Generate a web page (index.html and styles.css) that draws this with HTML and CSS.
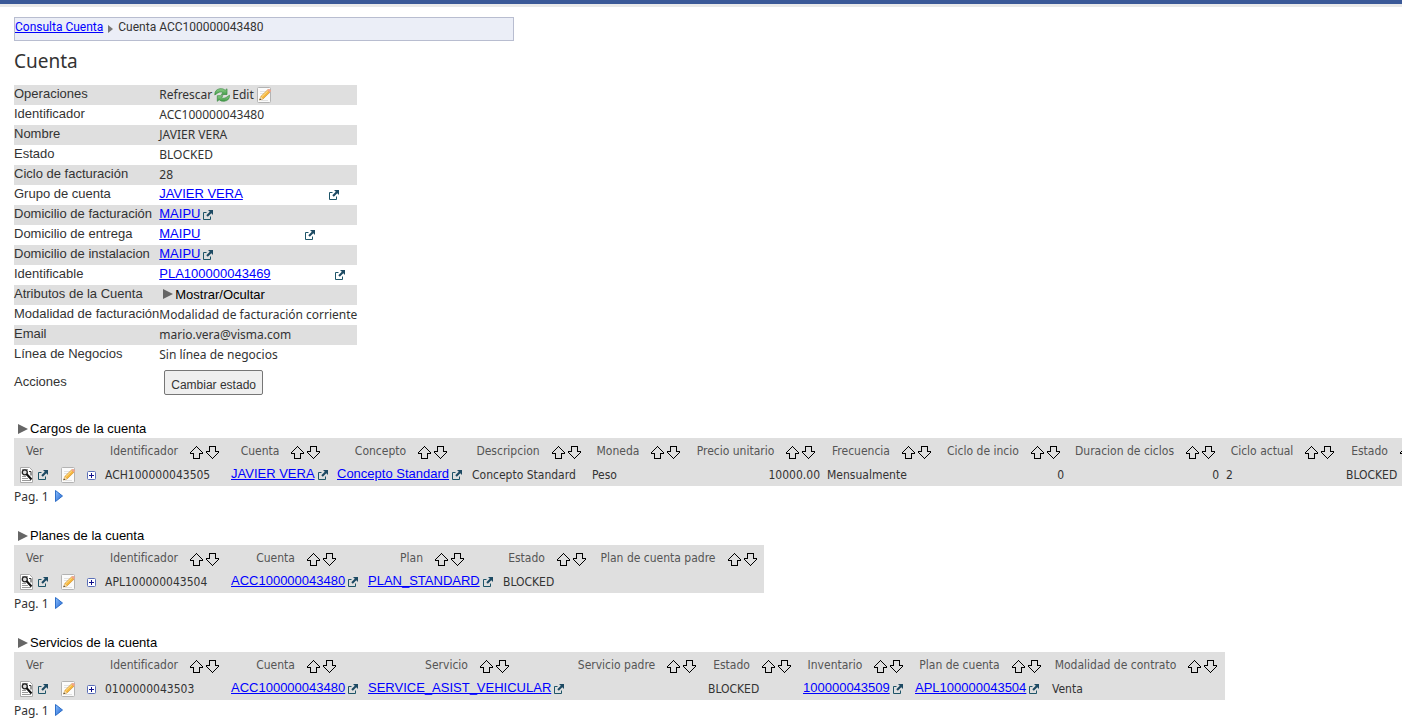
FILE: index.html
```html
<!DOCTYPE html>
<html lang="es">
<head>
  <meta charset="UTF-8">
  <meta name="viewport" content="width=device-width, initial-scale=1.0">
  <title>Cuenta</title>
  <link rel="stylesheet" href="styles.css">
</head>
<body>
  <!-- Shared icons -->
  <svg class="sprite" aria-hidden="true">
    <defs>
      <linearGradient id="blue" x1="0" y1="0" x2="1" y2="1">
        <stop offset="0" stop-color="#8fc4ff"/>
        <stop offset="1" stop-color="#1c5fd0"/>
      </linearGradient>
      <linearGradient id="green" x1="0" y1="0" x2="0" y2="1">
        <stop offset="0" stop-color="#8fd08a"/>
        <stop offset="1" stop-color="#3f9a45"/>
      </linearGradient>
    </defs>
    <symbol id="i-ext" viewBox="0 0 10 10">
      <path d="M3.500 2.500H.500v7h7v-3" fill="none" stroke="#1d5468"/>
      <path d="M5 0h5v5L8.300 3.300 4.800 6.800 3.300 5.300 6.800 1.800z" fill="#1d4a63"/>
    </symbol>
    <symbol id="i-edit" viewBox="0 0 16 16">
      <rect x="1.500" y=".5" width="13" height="15" rx="1" fill="#fbfbfb" stroke="#b3b3b3"/>
      <path d="M4 4.500h6M4 6.500h4M5 13.500h7" stroke="#e2e2e2"/>
      <path d="M3.500 13l1.300-3.500L11.500 3 14 5.200 7 12z" fill="#f6b73c" stroke="#c98a28" stroke-width=".6"/>
      <path d="M5.800 9.700l6-5.800" stroke="#ffe39a"/>
      <path d="M11.300 3l1-.9q.6-.4 1.200 0l1.300 1.200q.5.600 0 1.200l-1 1z" fill="#efa58c"/>
      <path d="M3.500 13l1.300-3.500L7 12z" fill="#f3dcae"/>
      <path d="M3.300 13.300l.8-1.900 1.200 1.200z" fill="#333"/>
    </symbol>
    <symbol id="i-view" viewBox="0 0 13 16">
      <path d="M.500.500h9l3 3v12H.500z" fill="#fff" stroke="#aaa"/>
      <path d="M2 9.500h4M2 11.500h6M2 13.500h9M2 2.500h6" stroke="#999"/>
      <circle cx="4.800" cy="5.300" r="2.500" fill="#ddd" stroke="#222" stroke-width="1.300"/>
      <path d="M6.500 7l5 5.500" stroke="#111" stroke-width="2.200"/>
      <path d="M9 4.500h2v4" fill="none" stroke="#333"/>
    </symbol>
    <symbol id="i-plus" viewBox="0 0 9 9">
      <rect x=".5" y=".5" width="8" height="8" rx="1" fill="#fff" stroke="#5a6fb8"/>
      <path d="M2 4.500h5M4.500 2v5" stroke="#10108c"/>
    </symbol>
    <symbol id="i-up" viewBox="0 0 13 13">
      <path d="M6.500.500L12.500 6.500v1H9.500v5h-6v-5H.500v-1z" fill="none" stroke="#000" shape-rendering="crispEdges"/>
    </symbol>
    <symbol id="i-down" viewBox="0 0 13 13">
      <path d="M6.500 12.500L12.500 6.500v-1H9.500v-5h-6v5H.500v1z" fill="none" stroke="#000" shape-rendering="crispEdges"/>
    </symbol>
    <symbol id="i-refresh" viewBox="0 0 16 16">
      <path d="M.8 8Q.6 2.500 6 1.700q3.300-.4 5.200 1.500L13 1.800V7.500H7.300l1.600-1.800Q7.300 4.300 5.200 5.200 3.500 6 .8 8z" fill="url(#green)" stroke="#3b8a42" stroke-width=".7"/>
      <path d="M15.500 8.200q.2 5.300-5.200 6-3.300.4-5.200-1.500L3.300 14.300V8.700H9l-1.600 1.700q1.600 1.500 3.700.6 1.700-.8 4.400-2.800z" fill="url(#green)" stroke="#3b8a42" stroke-width=".7"/>
    </symbol>
    <symbol id="i-next" viewBox="0 0 8 12">
      <path d="M.500.500L7.500 6 .500 11.500z" fill="url(#blue)" stroke="#2f6fc8"/>
    </symbol>
    <symbol id="i-tri" viewBox="0 0 10 10">
      <path d="M0 0L10 5 0 10z" fill="#666"/>
    </symbol>
    <symbol id="i-crumb" viewBox="0 0 5 8">
      <path d="M0 0L5 4 0 8z" fill="#777"/>
    </symbol>
  </svg>

  <header class="topbar"></header>

  <main class="page">
    <nav class="breadcrumb">
      <a href="#">Consulta Cuenta</a>
      <svg width="5" height="8"><use href="#i-crumb"/></svg>
      <span>Cuenta ACC100000043480</span>
    </nav>

    <h1>Cuenta</h1>

    <table class="details">
      <tr>
        <th scope="row">Operaciones</th>
        <td>
          <div class="tools">
            <button type="button">Refrescar <svg width="16" height="16"><use href="#i-refresh"/></svg></button>
            <button type="button">Edit <svg width="16" height="16"><use href="#i-edit"/></svg></button>
          </div>
        </td>
      </tr>
      <tr><th scope="row">Identificador</th><td>ACC100000043480</td></tr>
      <tr><th scope="row">Nombre</th><td>JAVIER VERA</td></tr>
      <tr><th scope="row">Estado</th><td>BLOCKED</td></tr>
      <tr><th scope="row">Ciclo de facturación</th><td>28</td></tr>
      <tr>
        <th scope="row">Grupo de cuenta</th>
        <td><div class="ref"><span class="ref-md"><a href="#">JAVIER VERA</a></span><a class="ext" href="#" aria-label="Abrir"><svg width="10" height="10"><use href="#i-ext"/></svg></a></div></td>
      </tr>
      <tr>
        <th scope="row">Domicilio de facturación</th>
        <td><div class="ref"><a href="#">MAIPU</a><a class="ext" href="#" aria-label="Abrir"><svg width="10" height="10"><use href="#i-ext"/></svg></a></div></td>
      </tr>
      <tr>
        <th scope="row">Domicilio de entrega</th>
        <td><div class="ref"><span class="ref-sm"><a href="#">MAIPU</a></span><a class="ext" href="#" aria-label="Abrir"><svg width="10" height="10"><use href="#i-ext"/></svg></a></div></td>
      </tr>
      <tr>
        <th scope="row">Domicilio de instalacion</th>
        <td><div class="ref"><a href="#">MAIPU</a><a class="ext" href="#" aria-label="Abrir"><svg width="10" height="10"><use href="#i-ext"/></svg></a></div></td>
      </tr>
      <tr>
        <th scope="row">Identificable</th>
        <td><div class="ref"><span class="ref-lg"><a href="#">PLA100000043469</a></span><a class="ext" href="#" aria-label="Abrir"><svg width="10" height="10"><use href="#i-ext"/></svg></a></div></td>
      </tr>
      <tr>
        <th scope="row">Atributos de la Cuenta</th>
        <td><button type="button" class="toggle"><svg width="10" height="10"><use href="#i-tri"/></svg>Mostrar/Ocultar</button></td>
      </tr>
      <tr><th scope="row">Modalidad de facturación</th><td>Modalidad de facturación corriente</td></tr>
      <tr><th scope="row">Email</th><td>mario.vera@visma.com</td></tr>
      <tr><th scope="row">Línea de Negocios</th><td>Sin línea de negocios</td></tr>
      <tr class="actions">
        <th scope="row">Acciones</th>
        <td><button type="button" class="btn">Cambiar estado</button></td>
      </tr>
    </table>

    <section class="block">
      <h2><button type="button" class="toggle"><svg width="10" height="10"><use href="#i-tri"/></svg>Cargos de la cuenta</button></h2>
      <table class="grid">
        <colgroup>
          <col class="w-ver"><col class="w-126"><col class="w-106"><col class="w-135"><col class="w-120"><col class="w-100">
          <col class="w-135"><col class="w-116"><col class="w-128"><col class="w-155"><col class="w-120"><col class="w-95">
        </colgroup>
        <thead>
          <tr>
            <th class="ver">Ver</th>
            <th data-sort>Identificador</th>
            <th data-sort>Cuenta</th>
            <th data-sort>Concepto</th>
            <th data-sort>Descripcion</th>
            <th data-sort>Moneda</th>
            <th data-sort>Precio unitario</th>
            <th data-sort>Frecuencia</th>
            <th data-sort>Ciclo de incio</th>
            <th data-sort>Duracion de ciclos</th>
            <th data-sort>Ciclo actual</th>
            <th data-sort>Estado</th>
          </tr>
        </thead>
        <tbody>
          <tr>
            <td data-icons></td>
            <td>ACH100000043505</td>
            <td data-ref>JAVIER VERA</td>
            <td data-ref>Concepto Standard</td>
            <td>Concepto Standard</td>
            <td>Peso</td>
            <td class="num">10000.00</td>
            <td>Mensualmente</td>
            <td class="num">0</td>
            <td class="num">0</td>
            <td>2</td>
            <td>BLOCKED</td>
          </tr>
        </tbody>
      </table>
      <div class="pager">Pag. 1 <button type="button" aria-label="Siguiente"><svg width="8" height="12"><use href="#i-next"/></svg></button></div>
    </section>

    <section class="block">
      <h2><button type="button" class="toggle"><svg width="10" height="10"><use href="#i-tri"/></svg>Planes de la cuenta</button></h2>
      <table class="grid">
        <colgroup>
          <col class="w-ver"><col class="w-126"><col class="w-137"><col class="w-135"><col class="w-95"><col class="w-168">
        </colgroup>
        <thead>
          <tr>
            <th class="ver">Ver</th>
            <th data-sort>Identificador</th>
            <th data-sort>Cuenta</th>
            <th data-sort>Plan</th>
            <th data-sort>Estado</th>
            <th data-sort>Plan de cuenta padre</th>
          </tr>
        </thead>
        <tbody>
          <tr>
            <td data-icons></td>
            <td>APL100000043504</td>
            <td data-ref>ACC100000043480</td>
            <td data-ref>PLAN_STANDARD</td>
            <td>BLOCKED</td>
            <td></td>
          </tr>
        </tbody>
      </table>
      <div class="pager">Pag. 1 <button type="button" aria-label="Siguiente"><svg width="8" height="12"><use href="#i-next"/></svg></button></div>
    </section>

    <section class="block">
      <h2><button type="button" class="toggle"><svg width="10" height="10"><use href="#i-tri"/></svg>Servicios de la cuenta</button></h2>
      <table class="grid">
        <colgroup>
          <col class="w-ver"><col class="w-126"><col class="w-137"><col class="w-205"><col class="w-135"><col class="w-95">
          <col class="w-112"><col class="w-137"><col class="w-175">
        </colgroup>
        <thead>
          <tr>
            <th class="ver">Ver</th>
            <th data-sort>Identificador</th>
            <th data-sort>Cuenta</th>
            <th data-sort>Servicio</th>
            <th data-sort>Servicio padre</th>
            <th data-sort>Estado</th>
            <th data-sort>Inventario</th>
            <th data-sort>Plan de cuenta</th>
            <th data-sort>Modalidad de contrato</th>
          </tr>
        </thead>
        <tbody>
          <tr>
            <td data-icons></td>
            <td>0100000043503</td>
            <td data-ref>ACC100000043480</td>
            <td data-ref>SERVICE_ASIST_VEHICULAR</td>
            <td></td>
            <td>BLOCKED</td>
            <td data-ref>100000043509</td>
            <td data-ref>APL100000043504</td>
            <td>Venta</td>
          </tr>
        </tbody>
      </table>
      <div class="pager">Pag. 1 <button type="button" aria-label="Siguiente"><svg width="8" height="12"><use href="#i-next"/></svg></button></div>
    </section>
  </main>

  <script>
    function icon(name, w, h) {
      return `<svg width="${w}" height="${h}"><use href="#i-${name}"/></svg>`;
    }

    // sort arrows in every sortable header
    document.querySelectorAll('th[data-sort]').forEach(th => {
      th.innerHTML = `
        <div class="sort">
          <span>${th.textContent}</span>
          <button type="button" aria-label="Ascendente">${icon('up', 13, 13)}</button>
          <button type="button" aria-label="Descendente">${icon('down', 13, 13)}</button>
        </div>
      `;
    });

    // link followed by "open in new window"
    document.querySelectorAll('td[data-ref]').forEach(td => {
      td.innerHTML = `<div class="ref"><a href="#">${td.textContent}</a><a class="ext" href="#" aria-label="Abrir">${icon('ext', 10, 10)}</a></div>`;
    });

    // row actions
    document.querySelectorAll('td[data-icons]').forEach(td => {
      td.innerHTML = `
        <div class="icons">
          <button type="button" aria-label="Ver">${icon('view', 13, 16)}</button>
          <button type="button" aria-label="Abrir">${icon('ext', 10, 10)}</button>
          <button type="button" class="row-edit" aria-label="Editar">${icon('edit', 16, 16)}</button>
          <button type="button" class="row-plus" aria-label="Expandir">${icon('plus', 9, 9)}</button>
        </div>
      `;
    });
  </script>
</body>
</html>
```
FILE: styles.css
```css
body {
  margin: 0;
  font-family: "DejaVu Sans Condensed", Roboto, sans-serif;
  font-size: 12px;
  color: #333;
  background-color: #fff;
  overflow-x: hidden;
}

svg {
  display: block;
  flex: none;
}

button {
  padding: 0;
  border: none;
  background: none;
  font: inherit;
  color: inherit;
  cursor: pointer;
}

a {
  color: #0000ff;
}

.sprite {
  position: absolute;
  width: 0;
  height: 0;
}

.topbar {
  height: 4px;
  background-color: #3b5998;
  border-bottom: 3px solid #e9e9e9;
}

.page {
  padding: 10px 0 0 14px;
}

.breadcrumb {
  display: flex;
  gap: 5px;
  box-sizing: border-box;
  max-width: 500px;
  height: 24px;
  font-family: Roboto, sans-serif;
  line-height: 18px;
  background-color: #ebeef7;
  border: 1px solid #b8bdd0;
}

.breadcrumb svg {
  margin-top: 7px;
}

h1 {
  margin: 6px 0 10px;
  font-family: "Noto Sans", sans-serif;
  font-size: 19px;
  font-weight: normal;
  line-height: 28px;
}

.details {
  border-collapse: collapse;
}

.details tr:nth-child(odd) {
  background-color: #dfdfdf;
}

.details th,
.details td {
  height: 20px;
  padding: 0;
  line-height: 20px;
  white-space: nowrap;
}

.details th {
  min-width: 145px;
  font-family: "Liberation Sans", Arial, sans-serif;
  font-size: 13px;
  font-weight: normal;
  line-height: 18px;
  text-align: left;
  vertical-align: top;
}

.details td {
  min-width: 198px;
  font-family: "Noto Sans", sans-serif;
}

.details tr.actions {
  background: none;
}

.details .actions th,
.details .actions td {
  height: 34px;
  vertical-align: middle;
}

.details .toggle {
  padding-bottom: 2px;
}

.tools,
.tools button {
  display: flex;
  align-items: center;
}

.tools button {
  gap: 2px;
  margin-right: 2px;
}

.ref {
  display: flex;
  align-items: center;
  gap: 3px;
  height: 20px;
  font-family: "Liberation Sans", Arial, sans-serif;
  font-size: 13px;
  line-height: 16px;
  padding-bottom: 2px;
  box-sizing: border-box;
}

.ref .ext {
  padding-top: 2px;
}

.ref-sm {
  width: 143px;
}

.ref-md {
  width: 167px;
}

.ref-lg {
  width: 173px;
}

.toggle {
  display: flex;
  align-items: center;
  gap: 2px;
  margin-left: 4px;
  font-family: "Liberation Sans", Arial, sans-serif;
  font-size: 13px;
  line-height: 15px;
  color: #000;
}

.btn {
  height: 25px;
  margin-left: 5px;
  padding: 4px 6px 0;
  font-family: "Liberation Sans", Arial, sans-serif;
  background-color: #efefef;
  border: 1px solid #767676;
  border-radius: 2px;
}

.block {
  margin-top: 22px;
}

.block h2 {
  margin: 0;
  padding-bottom: 2px;
  font-size: 13px;
  font-weight: normal;
}

.grid {
  width: max-content;
  table-layout: fixed;
  border-collapse: collapse;
  background-color: #dfdfdf;
}

.grid th,
.grid td {
  box-sizing: border-box;
  height: 24px;
  padding: 2px 5px 0 2px;
  white-space: nowrap;
}

.grid th {
  font-weight: normal;
  color: #555;
}

.grid .ver {
  padding-left: 12px;
  text-align: left;
}

.grid .num {
  text-align: right;
}

.sort {
  display: flex;
  justify-content: center;
  gap: 3px;
}

.sort span {
  padding-right: 9px;
}

.sort svg {
  margin-top: 2px;
}

.icons {
  display: flex;
  align-items: center;
  gap: 5px;
  padding-left: 4px;
}

.row-edit {
  margin-left: 7px;
}

.row-plus {
  margin-left: 6px;
}

.pager {
  display: flex;
  align-items: center;
  gap: 6px;
  height: 20px;
  font-family: "Noto Sans", sans-serif;
}

.w-ver { width: 89px; }
.w-95 { width: 95px; }
.w-100 { width: 100px; }
.w-106 { width: 106px; }
.w-112 { width: 112px; }
.w-116 { width: 116px; }
.w-120 { width: 120px; }
.w-126 { width: 126px; }
.w-128 { width: 128px; }
.w-135 { width: 135px; }
.w-137 { width: 137px; }
.w-155 { width: 155px; }
.w-168 { width: 168px; }
.w-175 { width: 175px; }
.w-205 { width: 205px; }
```
